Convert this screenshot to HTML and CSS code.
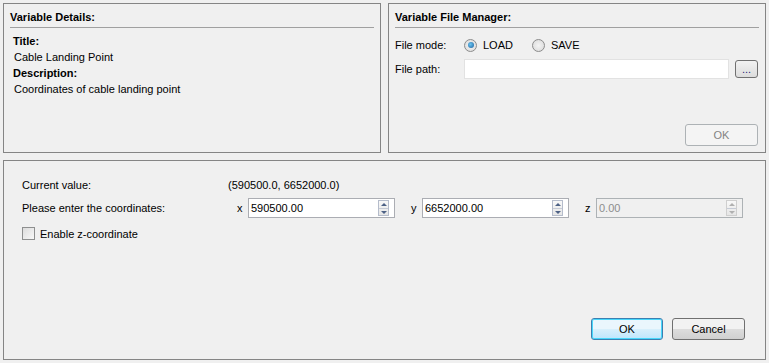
FILE: index.html
```html
<!DOCTYPE html>
<html lang="en">
<head>
  <meta charset="UTF-8" />
  <title>Variable Editor</title>
  <link rel="stylesheet" href="styles.css">
</head>
<body>
  <div class="dialog">
    <div class="top-row">
      <div class="panel details">
        <div class="panel-title">Variable Details:</div>
        <div class="details-body">
          <div class="bold">Title:</div>
          <div class="value">Cable Landing Point</div>
          <div class="bold">Description:</div>
          <div class="value">Coordinates of cable landing point</div>
        </div>
      </div>
      <div class="panel files">
        <div class="panel-title">Variable File Manager:</div>
        <div class="file-row">
          <span class="file-label">File mode:</span>
          <span class="radio checked"></span><span class="radio-text">LOAD</span>
          <span class="radio"></span><span class="radio-text">SAVE</span>
        </div>
        <div class="file-row">
          <span class="file-label">File path:</span>
          <input class="path-input" type="text">
          <button class="browse">...</button>
        </div>
        <div class="file-ok">
          <button class="btn disabled">OK</button>
        </div>
      </div>
    </div>

    <div class="panel editor">
      <div class="grid">
        <span>Current value:</span>
        <span class="current">(590500.0, 6652000.0)</span>
        <span>Please enter the coordinates:</span>
        <div class="coords">
          <span class="axis">x</span>
          <div class="spin"><span class="spin-text">590500.00</span><span class="arrows"><i class="up"></i><i class="down"></i></span></div>
          <span class="axis">y</span>
          <div class="spin"><span class="spin-text">6652000.00</span><span class="arrows"><i class="up"></i><i class="down"></i></span></div>
          <span class="axis">z</span>
          <div class="spin off"><span class="spin-text">0.00</span><span class="arrows"><i class="up"></i><i class="down"></i></span></div>
        </div>
      </div>
      <div class="check-row">
        <span class="checkbox"></span>
        <span>Enable z-coordinate</span>
      </div>
      <div class="actions">
        <button class="btn default">OK</button>
        <button class="btn">Cancel</button>
      </div>
    </div>
  </div>
</body>
</html>
```

FILE: styles.css
```css
body {
  margin: 0;
  background: #f0f0f0;
  font-family: Tahoma, "Liberation Sans", Arial, sans-serif;
  font-size: 11px;
  color: #000;
}

.dialog {
  padding: 3px;
  width: 763px;
}

.top-row {
  display: flex;
  gap: 7px;
  margin-bottom: 7px;
}

.panel {
  border: 1px solid #858585;
  box-sizing: border-box;
  background: #f0f0f0;
}

.details,
.files {
  width: 378px;
  height: 150px;
  padding: 0 6px;
}

.panel-title {
  font-weight: bold;
  height: 23px;
  line-height: 27px;
  border-bottom: 1px solid #a0a0a0;
  margin-bottom: 5px;
}

.details .panel-title {
  margin-bottom: 6px;
}

.details-body {
  padding-left: 3px;
}

.bold {
  font-weight: bold;
  line-height: 15px;
}

.value {
  padding-left: 1px;
  line-height: 17px;
}

.file-row {
  display: flex;
  align-items: center;
  height: 24px;
}

.file-label {
  width: 69px;
}

.radio {
  width: 11px;
  height: 11px;
  border: 1px solid #8c8c8c;
  border-radius: 50%;
  background: radial-gradient(circle, #f4f4f4, #d8d8d8);
  margin-right: 6px;
  position: relative;
}

.radio.checked::after {
  content: "";
  position: absolute;
  left: 2.5px;
  top: 2.5px;
  width: 6px;
  height: 6px;
  border-radius: 50%;
  background: radial-gradient(circle at 40% 40%, #6ac4f0, #1b5f9e);
}

.radio-text {
  margin-right: 19px;
}

.path-input {
  width: 265px;
  height: 20px;
  box-sizing: border-box;
  border: 1px solid #e2e2e2;
  background: #fff;
  margin: 0 6px 0 0;
  padding: 0;
}

.browse {
  width: 23px;
  height: 18px;
  padding: 0;
  border: 1px solid #707070;
  border-radius: 3px;
  background: linear-gradient(#f2f2f2, #dcdcdc);
  font-family: inherit;
  font-size: 11px;
  line-height: 12px;
  color: #2a2a7a;
}

.file-ok {
  display: flex;
  justify-content: flex-end;
  margin-top: 43px;
  padding-right: 1px;
}

.btn {
  width: 73px;
  height: 22px;
  padding: 0;
  border: 1px solid #707070;
  border-radius: 3px;
  background: linear-gradient(#f2f2f2 50%, #dddddd 50%, #d0d0d0);
  font-family: inherit;
  font-size: 11px;
  color: #000;
}

.btn.disabled {
  border-color: #adb2b5;
  background: #f4f4f4;
  color: #838383;
}

.btn.default {
  width: 72px;
  border-color: #3c7fb1;
  box-shadow: inset 0 0 0 1px #48d7fb;
  background: linear-gradient(#eaf6fd 50%, #d9f0fc 50%, #bee6fd);
}

.editor {
  height: 200px;
  padding: 16px 18px 0 18px;
}

.grid {
  display: grid;
  grid-template-columns: 206px auto;
  grid-template-rows: 16px 20px;
  row-gap: 5px;
  align-items: center;
}

.coords {
  display: flex;
  align-items: center;
}

.axis {
  width: 11px;
  margin-left: 16px;
}

.coords .axis:first-child {
  margin-left: 9px;
}

.spin {
  width: 147px;
  height: 20px;
  box-sizing: border-box;
  border: 1px solid #abadb3;
  background: #fff;
  display: flex;
  align-items: center;
  justify-content: space-between;
}

.spin-text {
  padding-left: 2px;
}

.spin.off {
  background: #f0f0f0;
  border-color: #adb2b5;
  color: #8d8d8d;
}

.arrows {
  width: 11px;
  height: 16px;
  margin-right: 5px;
  display: flex;
  flex-direction: column;
  border: 1px solid #b5bccb;
  box-sizing: border-box;
  background: linear-gradient(#f8f8f8, #e6e6e6);
}

.arrows i {
  flex: 1;
  position: relative;
}

.arrows .up {
  border-bottom: 1px solid #c6cbd6;
}

.arrows i::after {
  content: "";
  position: absolute;
  left: 1.5px;
  border-left: 3px solid transparent;
  border-right: 3px solid transparent;
}

.arrows .up::after {
  top: 2px;
  border-bottom: 3px solid #4d6185;
}

.arrows .down::after {
  top: 2px;
  border-top: 3px solid #4d6185;
}

.spin.off .arrows {
  border-color: #cfcfcf;
}

.spin.off .arrows .up::after {
  border-bottom-color: #b0b0b0;
}

.spin.off .arrows .down::after {
  border-top-color: #b0b0b0;
}

.check-row {
  display: flex;
  align-items: center;
  margin-top: 9px;
  height: 13px;
}

.checkbox {
  width: 11px;
  height: 11px;
  border: 1px solid #8e8f8f;
  background: linear-gradient(135deg, #dcdcdc, #f8f8f8);
  margin-right: 5px;
}

.actions {
  display: flex;
  justify-content: flex-end;
  gap: 9px;
  margin-top: 78px;
  padding-right: 2px;
}
```
